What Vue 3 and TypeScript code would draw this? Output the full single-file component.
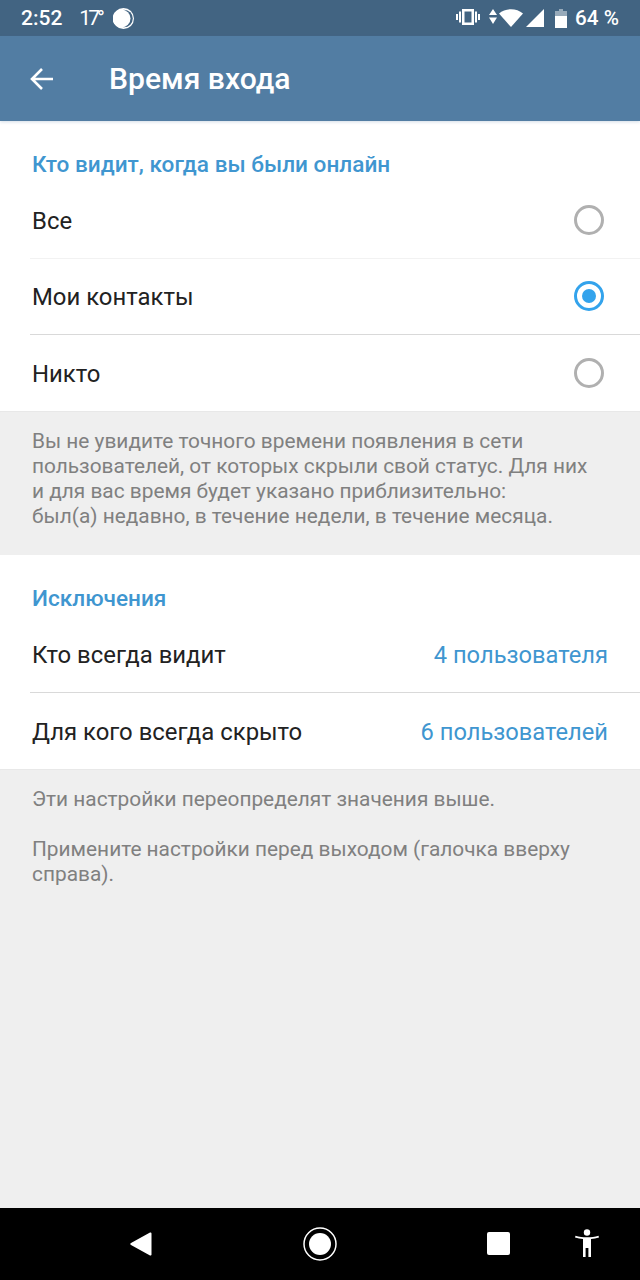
<script setup lang="ts">
interface Option {
  label: string;
  checked: boolean;
}

const options: Option[] = [
  { label: "Все", checked: false },
  { label: "Мои контакты", checked: true },
  { label: "Никто", checked: false },
];

const exceptions = [
  { label: "Кто всегда видит", value: "4 пользователя" },
  { label: "Для кого всегда скрыто", value: "6 пользователей" },
];
</script>

<template>
  <div class="screen">
    <div class="status">
      <div class="status__left">
        <span class="status__time">2:52</span>
        <span class="status__temp">17°</span>
        <svg class="moon" width="21" height="21" viewBox="0 0 21 21">
          <circle cx="10.500" cy="10.500" r="10.500" fill="#fff" />
          <circle cx="11" cy="10.500" r="8.800" fill="#426482" />
          <circle cx="8.500" cy="10.500" r="9" fill="#fff" />
        </svg>
      </div>
      <div class="status__right">
        <svg class="vibrate" width="24" height="16" viewBox="0 0 24 16" fill="#fff">
          <path d="M6 0h12v16H6zM8.500 2.500v11h7v-11z" fill-rule="evenodd" />
          <rect x="3" y="2.500" width="2" height="11" />
          <rect x="19" y="2.500" width="2" height="11" />
          <rect x="0" y="5" width="2" height="6" />
          <rect x="22" y="5" width="2" height="6" />
        </svg>
        <svg class="updown" width="8" height="15" viewBox="0 0 8 15" fill="#fff">
          <path d="M4 0l4 6H0zM4 15l4-6.500H0z" />
        </svg>
        <svg class="wifi" width="24" height="18" viewBox="0 0 24 18" fill="#fff">
          <path d="M0 4.500C3.300 1.800 7.500.3 12 .3s8.700 1.500 12 4.200L12 18z" />
        </svg>
        <svg class="signal" width="18" height="18" viewBox="0 0 18 18" fill="#fff">
          <path d="M18 0v18H0z" />
        </svg>
        <svg class="battery" width="12" height="19" viewBox="0 0 12 19">
          <path d="M4 0h4v2h4v5H0V2h4z" fill="#fff" fill-opacity=".45" />
          <path d="M0 7h12v12H0z" fill="#fff" />
        </svg>
        <span class="status__battery">64 %</span>
      </div>
    </div>

    <header class="bar">
      <svg class="bar__back" width="24" height="24" viewBox="0 0 24 24">
        <path d="M23 12H2.500M12 2L2 12l10 10" fill="none" stroke="#fff" stroke-width="2.600" />
      </svg>
      <h1 class="bar__title">Время входа</h1>
    </header>

    <section class="card">
      <h2 class="card__head">Кто видит, когда вы были онлайн</h2>
      <div v-for="(o, i) in options" :key="o.label" class="row" :class="{ 'row--line': i < options.length - 1, 'row--faint': i === 0 }">
        <span class="row__label">{{ o.label }}</span>
        <span class="radio" :class="{ 'radio--on': o.checked }"></span>
      </div>
    </section>

    <p class="note note--first">
      Вы не увидите точного времени появления в сети<br />
      пользователей, от которых скрыли свой статус. Для них<br />
      и для вас время будет указано приблизительно:<br />
      был(а) недавно, в течение недели, в течение месяца.
    </p>

    <section class="card">
      <h2 class="card__head">Исключения</h2>
      <div v-for="(e, i) in exceptions" :key="e.label" class="row" :class="{ 'row--line': i === 0 }">
        <span class="row__label">{{ e.label }}</span>
        <span class="row__value">{{ e.value }}</span>
      </div>
    </section>

    <div class="rest">
      <p class="note">Эти настройки переопределят значения выше.</p>
      <p class="note">Примените настройки перед выходом (галочка вверху<br />справа).</p>
    </div>

    <nav class="nav">
      <svg class="nav__back" width="22" height="24" viewBox="0 0 22 24" fill="#fff">
        <path d="M20 .5c.8-.3 1.500.2 1.500 1v21c0 .8-.7 1.300-1.500 1L1 13c-1-.5-1-1.500 0-2z" />
      </svg>
      <svg class="nav__home" width="34" height="34" viewBox="0 0 34 34">
        <circle cx="17" cy="17" r="16" fill="none" stroke="#fff" stroke-width="1.500" />
        <circle cx="17" cy="17" r="11" fill="#fff" />
      </svg>
      <span class="nav__square"></span>
      <svg class="nav__a11y" width="24" height="28" viewBox="0 0 24 28" fill="#fff">
        <circle cx="12" cy="3.500" r="3.200" />
        <path d="M0 8.500l.5-1.800c3.500 1 7.500 1.500 11.500 1.500s8-.5 11.500-1.500l.5 1.800c-2.800.8-5.500 1.300-8 1.600V28h-2.600v-9h-2.800v9H8V10.100C5.500 9.800 2.800 9.300 0 8.500z" />
      </svg>
    </nav>
  </div>
</template>

<style scoped>
.screen {
  width: 640px;
  height: 1280px;
  display: flex;
  flex-direction: column;
  background: #efefef;
  font-family: Roboto, "Noto Sans", sans-serif;
  overflow: hidden;
}

.status {
  height: 36px;
  flex: none;
  background: #426482;
  color: #fff;
  display: flex;
  align-items: center;
  justify-content: space-between;
  padding: 0 21px;
  box-sizing: border-box;
}

.status__left,
.status__right {
  display: flex;
  align-items: center;
}

.status__time {
  font-size: 21px;
  font-weight: 500;
}

.status__temp {
  font-size: 21px;
  margin-left: 17px;
  letter-spacing: -3px;
}

.moon {
  margin-left: 11px;
}

.vibrate {
  margin-top: -2px;
}

.updown {
  margin-left: 9px;
  margin-top: -3px;
}

.wifi {
  margin-left: 2px;
}

.signal {
  margin-left: 3px;
}

.battery {
  margin-left: 11px;
}

.status__battery {
  font-size: 20.700px;
  font-weight: 500;
  margin-left: 8px;
}

.bar {
  height: 85px;
  flex: none;
  background: #527da3;
  display: flex;
  align-items: center;
  box-shadow: 0 1px 3px rgba(82, 125, 163, 0.25);
  position: relative;
}

.bar__back {
  margin-left: 30px;
}

.bar__title {
  margin: 0 0 0 55px;
  font-size: 30.100px;
  font-weight: 500;
  color: #fff;
}

.card {
  flex: none;
  background: #fff;
  padding-top: 1px;
}

.card__head {
  margin: 0;
  height: 61px;
  padding: 30px 32px 0;
  box-sizing: border-box;
  font-size: 22.600px;
  line-height: 25px;
  font-weight: 500;
  color: #3f96d0;
}

.row {
  height: 76px;
  box-sizing: border-box;
  margin-left: 30px;
  padding: 0 32px 0 2px;
  display: flex;
  align-items: center;
  justify-content: space-between;
  font-size: 23.900px;
  color: #222222;
}

.row__label {
  padding-top: 1px;
}

.row--line {
  border-bottom: 1px solid #d9d9d9;
}

.row--faint {
  border-bottom-color: #f2f2f2;
}

.row__value {
  color: #3f96d0;
  font-size: 23.700px;
  padding-top: 1px;
}

.radio {
  width: 30px;
  height: 30px;
  box-sizing: border-box;
  margin-right: 4px;
  margin-top: -1px;
  border: 3px solid #b0b0b0;
  border-radius: 50%;
}

.radio--on {
  border-color: #33a3ec;
  position: relative;
}

.radio--on::after {
  content: "";
  position: absolute;
  left: 5px;
  top: 5px;
  width: 14px;
  height: 14px;
  border-radius: 50%;
  background: #33a3ec;
}

.note {
  margin: 0;
  font-size: 20.850px;
  line-height: 25px;
  color: #808080;
}

.note--first {
  height: 144px;
  flex: none;
  box-sizing: border-box;
  padding: 18px 32px 0;
  box-shadow: inset 0 1px 1px rgba(0, 0, 0, 0.03);
}

.rest {
  flex: 1;
  padding: 18px 32px 0;
  display: flex;
  flex-direction: column;
  gap: 25px;
  box-shadow: inset 0 1px 1px rgba(0, 0, 0, 0.03);
}

.nav {
  height: 72px;
  flex: none;
  background: #000;
  position: relative;
}

.nav__back {
  position: absolute;
  left: 130px;
  top: 24px;
}

.nav__home {
  position: absolute;
  left: 303px;
  top: 19px;
}

.nav__square {
  position: absolute;
  left: 487px;
  top: 24px;
  width: 23px;
  height: 23px;
  background: #fff;
  border-radius: 2px;
}

.nav__a11y {
  position: absolute;
  left: 575px;
  top: 21px;
}
</style>
